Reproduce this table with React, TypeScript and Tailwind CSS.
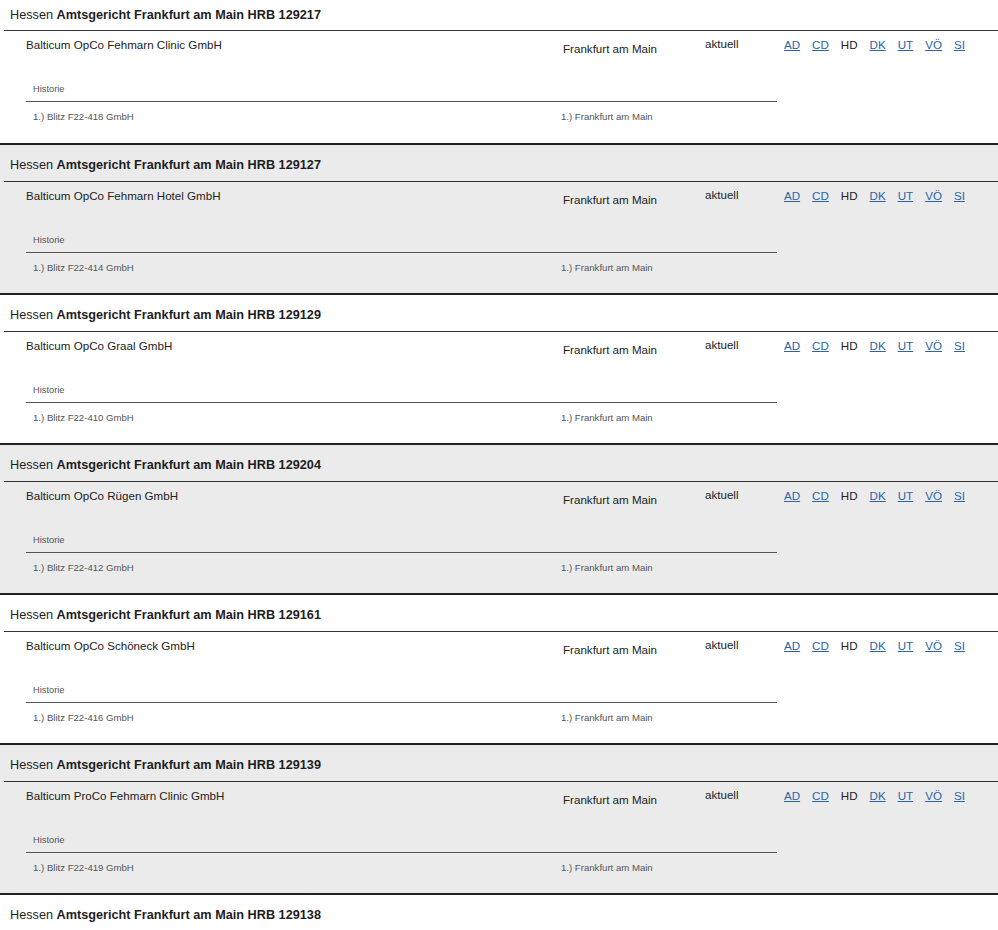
import React from "react";

type Entry = { hrb: string; name: string; old: string };

const entries: Entry[] = [
  { hrb: "129217", name: "Balticum OpCo Fehmarn Clinic GmbH", old: "Blitz F22-418 GmbH" },
  { hrb: "129127", name: "Balticum OpCo Fehmarn Hotel GmbH", old: "Blitz F22-414 GmbH" },
  { hrb: "129129", name: "Balticum OpCo Graal GmbH", old: "Blitz F22-410 GmbH" },
  { hrb: "129204", name: "Balticum OpCo Rügen GmbH", old: "Blitz F22-412 GmbH" },
  { hrb: "129161", name: "Balticum OpCo Schöneck GmbH", old: "Blitz F22-416 GmbH" },
  { hrb: "129139", name: "Balticum ProCo Fehmarn Clinic GmbH", old: "Blitz F22-419 GmbH" },
  { hrb: "129138", name: "Balticum ProCo Fehmarn Hotel GmbH", old: "Blitz F22-415 GmbH" },
];

const docs = ["AD", "CD", "HD", "DK", "UT", "VÖ", "SI"];

function Block({ e, i }: { e: Entry; i: number }) {
  const first = i === 0;
  const gray = i % 2 === 1;
  return (
    <div
      className={
        (first ? "" : "border-t-2 border-[#222222] ") + (gray ? "bg-[#ebebeb]" : "bg-white")
      }
    >
      <div
        className={
          (first ? "h-[30px] pt-[7px] " : "h-[36px] pt-[12px] ") +
          "pl-[10px] text-[12.7px] leading-[16px] text-[#1e1e1e] whitespace-nowrap"
        }
      >
        Hessen <span className="font-bold">Amtsgericht Frankfurt am Main HRB {e.hrb}</span>
      </div>
      <div className="ml-[4px] border-b border-[#333333]" />
      <div className={first ? "h-[112px]" : "h-[111px]"}>
        <div className="flex h-[46px] text-[11.6px] leading-[14px] text-[#222222]">
          <div className="w-[563px] shrink-0 pl-[26px] pt-[7px]">{e.name}</div>
          <div className="w-[142px] shrink-0 pt-[11px]">Frankfurt am Main</div>
          <div className="w-[79px] shrink-0 pt-[6px]">aktuell</div>
          <div className="flex gap-[12px] pt-[7px]">
            {docs.map((d) =>
              d === "HD" ? (
                <span key={d}>{d}</span>
              ) : (
                <a key={d} href="#" className="text-[#2b63a6] underline">
                  {d}
                </a>
              )
            )}
          </div>
        </div>
        <div className="ml-[26px] w-[751px]">
          <div className="h-[25px] pt-[7px] pl-[7px] border-b border-[#555555] text-[9.3px] leading-[11px] text-[#555555]">
            Historie
          </div>
          <div className="flex pt-[9px] text-[9.6px] leading-[11px] text-[#555555]">
            <div className="w-[535px] shrink-0 pl-[7px]">1.) {e.old}</div>
            <div>1.) Frankfurt am Main</div>
          </div>
        </div>
      </div>
    </div>
  );
}

export default function App() {
  return (
    <div
      className="w-[998px] h-[930px] overflow-hidden bg-white"
      style={{ fontFamily: '"Liberation Sans", Arial, sans-serif' }}
    >
      {entries.map((e, i) => (
        <Block key={e.hrb} e={e} i={i} />
      ))}
    </div>
  );
}
